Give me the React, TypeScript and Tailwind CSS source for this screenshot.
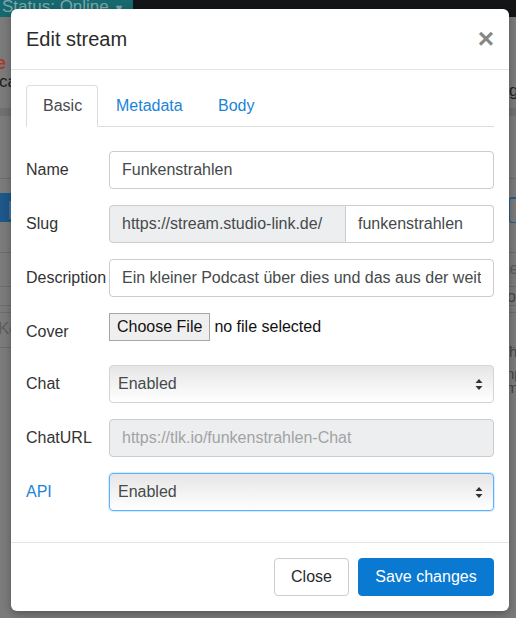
import { ReactNode } from "react"

function Row({ label, children, blue, h }: { label: string; children: ReactNode; blue?: boolean; h?: string }) {
  return (
    <div className={`grid grid-cols-[83px_minmax(0,1fr)] items-start ${h ?? ""}`}>
      <label className={`pt-[7px] text-[16px] leading-[24px] whitespace-nowrap ${blue ? "text-[#1a84d8]" : "text-[#333]"}`}>{label}</label>
      <div className="min-w-0">{children}</div>
    </div>
  )
}

function Input({ value }: { value: string }) {
  return (
    <div className="h-[38px] rounded-[4px] border border-[#ccc] px-[12px] text-[16px] leading-[36px] text-[#464a4c]">
      <div className="overflow-hidden whitespace-nowrap">{value}</div>
    </div>
  )
}

function Select({ focus }: { focus?: boolean }) {
  return (
    <div
      className={`flex h-[38px] items-center justify-between rounded-[4px] border bg-gradient-to-b from-[#e6e6e6] to-[#ffffff] pl-[8px] pr-[8px] text-[16px] text-[#464a4c] ${
        focus ? "border-[#5cb3fd] shadow-[0_0_0_1px_rgba(92,179,253,0.25)]" : "border-[#d4d4d4]"
      }`}
    >
      <span>Enabled</span>
      <svg width="8" height="13" viewBox="0 0 8 13" className="mr-[2px]">
        <path d="M4 1 L7.5 5 L0.5 5 Z" fill="#333" />
        <path d="M4 12 L7.5 8 L0.5 8 Z" fill="#333" />
      </svg>
    </div>
  )
}

function Backdrop() {
  return (
    <>
      <div className="absolute left-0 top-0 flex h-[17px] w-full bg-[#141517]">
        <div className="h-full w-[133px] overflow-hidden bg-[#16696f] pl-[2px] text-[17px] leading-[14px] text-[#7ea6ab]">
          Status: Online <span className="text-[11px]">▼</span>
        </div>
      </div>
      <div className="absolute left-0 top-[54px] w-[11px] overflow-hidden">
        <div className="-ml-[4px] text-[18px] font-bold leading-[18px] text-[#a83a2c]">e</div>
      </div>
      <div className="absolute left-0 top-[73px] w-[11px] overflow-hidden">
        <div className="-ml-[1px] text-[17px] leading-[18px] text-[#1e1e1e]">ca</div>
      </div>
      <div className="absolute left-[509px] top-[82px] w-[7px] overflow-hidden text-[17px] leading-[18px] text-[#1e1e1e]">g</div>
      <div className="absolute left-0 top-[108px] h-[8px] w-full bg-[#707070]" />
      <div className="absolute left-0 top-[178px] h-px w-full bg-[#6c6c6c]" />
      <div className="absolute left-0 top-[193px] h-[29px] w-[12px] bg-[#1d5889]" />
      <div className="absolute left-[9px] top-[201px] h-[18px] w-[3px] bg-[#4a7399]" />
      <div className="absolute left-[509px] top-[197px] h-[26px] w-[10px] rounded-l-[3px] border-l border-t-2 border-b border-[#235e90] bg-[#7b7b7b]" />
      <div className="absolute left-0 top-[252px] h-px w-full bg-[#6c6c6c]" />
      <div className="absolute left-[509px] top-[260px] w-[7px] overflow-hidden">
        <div className="-ml-[4px] text-[16px] leading-[18px] text-[#5a5a5a]">te</div>
      </div>
      <div className="absolute left-0 top-[286px] h-px w-full bg-[#6c6c6c]" />
      <div className="absolute left-[509px] top-[288px] w-[7px] overflow-hidden">
        <div className="-ml-[2px] text-[16px] leading-[18px] text-[#444]">o</div>
      </div>
      <div className="absolute left-0 top-[305px] h-px w-full bg-[#6c6c6c]" />
      <div className="absolute left-0 top-[312px] h-px w-full bg-[#6c6c6c]" />
      <div className="absolute left-0 top-[320px] w-[11px] overflow-hidden">
        <div className="-ml-[2px] text-[17px] leading-[18px] text-[#5e5e5e]">Ke</div>
      </div>
      <div className="absolute left-0 top-[347px] h-px w-full bg-[#6c6c6c]" />
      <div className="absolute left-[509px] top-[343px] w-[7px] overflow-hidden text-[15px] leading-[18px] text-[#444]">h</div>
      <div className="absolute left-[509px] top-[367px] w-[7px] overflow-hidden">
        <div className="-ml-[3px] text-[15px] leading-[14px] text-[#444]">
          np
          <br />
          m
        </div>
      </div>
    </>
  )
}

export default function App() {
  return (
    <div className="relative h-[618px] w-[516px] overflow-hidden bg-[#7b7b7b] font-['Liberation_Sans',Arial,sans-serif]">
      <Backdrop />
      <div className="absolute left-[11px] top-[9px] flex h-[602px] w-[498px] flex-col rounded-[6px] bg-white shadow-[0_3px_9px_rgba(0,0,0,0.3)]">
        <div className="flex h-[61px] items-center justify-between border-b border-[#e5e5e5] px-[15px]">
          <h4 className="text-[20px] leading-[30px] text-[#2b2b2b]">Edit stream</h4>
          <button className="text-[28px] font-bold leading-none text-[#868686]">×</button>
        </div>

        <div className="flex-1 px-[15px] pt-[15px]">
          <div className="flex h-[42px] border-b border-[#ddd]">
            <div className="-mb-px w-[72px] rounded-t-[4px] border border-[#ddd] border-b-white bg-white pl-[16px] pt-[8px] text-[16px] leading-[24px] text-[#464a4c]">
              Basic
            </div>
            <div className="ml-[2px] w-[100px] pl-[16px] pt-[9px] text-[16px] leading-[24px] text-[#1a84d8]">Metadata</div>
            <div className="ml-[2px] pl-[16px] pt-[9px] text-[16px] leading-[24px] text-[#1a84d8]">Body</div>
          </div>

          <div className="mt-[24px] flex flex-col gap-[16px]">
            <Row label="Name">
              <Input value="Funkenstrahlen" />
            </Row>
            <Row label="Slug">
              <div className="flex h-[38px] text-[16px]">
                <div className="w-[237px] shrink-0 rounded-l-[4px] border border-[#ccc] bg-[#eceeef] px-[12px] leading-[36px] text-[#464a4c] whitespace-nowrap">
                  https://stream.studio-link.de/
                </div>
                <div className="flex-1 rounded-r-[4px] border border-l-0 border-[#ccc] px-[12px] leading-[36px] text-[#464a4c]">
                  funkenstrahlen
                </div>
              </div>
            </Row>
            <Row label="Description">
              <Input value="Ein kleiner Podcast über dies und das aus der weiten Welt" />
            </Row>
            <Row label="Cover" h="h-[36px]">
              <div className="flex items-center text-[16px] text-[#111]">
                <span className="h-[28px] border border-[#a6a6a6] bg-[#efefef] px-[7px] leading-[26px]">Choose File</span>
                <span className="ml-[4px]">no file selected</span>
              </div>
            </Row>
            <Row label="Chat">
              <Select />
            </Row>
            <Row label="ChatURL">
              <div className="h-[38px] rounded-[4px] border border-[#ccc] bg-[#eceeef] px-[12px] text-[16px] leading-[36px] text-[#a3a3a3]">
                https://tlk.io/funkenstrahlen-Chat
              </div>
            </Row>
            <Row label="API" blue>
              <Select focus />
            </Row>
          </div>
        </div>

        <div className="flex justify-end gap-[9px] border-t border-[#e5e5e5] p-[15px]">
          <button className="h-[38px] w-[75px] rounded-[4px] border border-[#ccc] bg-white text-[16px] text-[#292b2c]">Close</button>
          <button className="h-[38px] w-[136px] rounded-[4px] border border-[#0a79d2] bg-[#0a79d2] text-[16px] text-white">Save changes</button>
        </div>
      </div>
    </div>
  )
}
